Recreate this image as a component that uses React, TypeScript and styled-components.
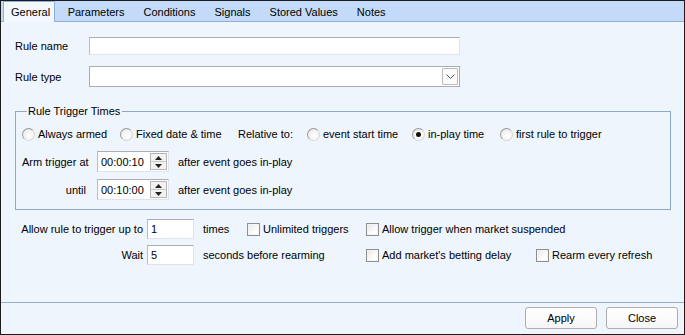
import React from "react";
import styled, { createGlobalStyle } from "styled-components";

const Global = createGlobalStyle`
  html, body { margin: 0; padding: 0; background: #ffffff; }
  body { font-family: "Liberation Sans", Arial, sans-serif; font-size: 11px; color: #000; }
  * { box-sizing: border-box; }
`;

const Window = styled.div`
  width: 685px;
  height: 335px;
  border: 1px solid #1c1c1c;
  background: #eef5fd;
  display: flex;
  flex-direction: column;
`;

const TabStrip = styled.div`
  height: 21px;
  flex: none;
  background: #c3dbf8;
  border-bottom: 1px solid #8fb0d8;
  display: flex;
  align-items: flex-end;
  padding-left: 2px;
`;

const Tab = styled.div<{ $active?: boolean }>`
  height: ${(p) => (p.$active ? "21px" : "19px")};
  margin-bottom: ${(p) => (p.$active ? "-1px" : "0")};
  padding: 0 ${(p) => (p.$active ? "4px" : "8.5px")} 0 ${(p) => (p.$active ? "7px" : "8.5px")};
  margin-right: ${(p) => (p.$active ? "3px" : "0")};
  display: flex;
  align-items: center;
  background: ${(p) => (p.$active ? "#f3f8fe" : "transparent")};
  border: 1px solid ${(p) => (p.$active ? "#8fb0d8" : "transparent")};
  border-bottom: none;
  white-space: nowrap;
`;

const Page = styled.div`
  flex: 1;
  padding: 14px 13px 0 14px;
  display: flex;
  flex-direction: column;
`;

const FormRow = styled.div<{ $mt?: number }>`
  display: flex;
  align-items: center;
  margin-top: ${(p) => p.$mt ?? 0}px;
`;

const Label = styled.div<{ $w: number; $align?: string; $pr?: number }>`
  width: ${(p) => p.$w}px;
  flex: none;
  text-align: ${(p) => p.$align ?? "left"};
  padding-right: ${(p) => p.$pr ?? 0}px;
  white-space: nowrap;
`;

const TextBox = styled.div<{ $w: number; $h: number; $ml?: number }>`
  width: ${(p) => p.$w}px;
  height: ${(p) => p.$h}px;
  margin-left: ${(p) => p.$ml ?? 0}px;
  flex: none;
  background: #fff;
  border: 1px solid #e2e3ea;
  border-top-color: #abadb3;
  border-left-color: #b9bcc4;
  display: flex;
  align-items: center;
  padding-left: 3px;
`;

const Combo = styled.div`
  width: 371px;
  height: 21px;
  background: #fff;
  border: 1px solid #acacac;
  display: flex;
  justify-content: flex-end;
  align-items: center;
  padding-right: 1px;
`;

const DropBtn = styled.div`
  width: 16px;
  height: 17px;
  border: 1px solid #bcbcbc;
  border-radius: 1px;
  background: #fbfbfb;
  display: flex;
  align-items: center;
  justify-content: center;
`;

const Group = styled.fieldset`
  margin: 17px 0 0 0;
  padding: 8px 6px 9px 6px;
  border: 1px solid #8ea9cb;
  border-radius: 0;
  min-width: 0;
`;

const Legend = styled.legend`
  padding: 0 2px 0 1px;
  margin-left: 5px;
  line-height: 14px;
`;

const RadioRow = styled.div`
  display: flex;
  align-items: center;
  height: 16px;
`;

const Option = styled.label<{ $w?: number }>`
  display: flex;
  align-items: center;
  width: ${(p) => (p.$w ? `${p.$w}px` : "auto")};
  flex: none;
  white-space: nowrap;
  gap: 3px;
`;

const Radio = styled.span<{ $checked?: boolean }>`
  width: 13px;
  height: 13px;
  border-radius: 50%;
  border: 1px solid #9a9a9a;
  border-right-color: #d6d6d6;
  border-bottom-color: #d6d6d6;
  background: radial-gradient(circle at 60% 60%, #ffffff 0%, #f2f2f2 55%, #dcdcdc 100%);
  display: inline-flex;
  align-items: center;
  justify-content: center;
  flex: none;
  &::after {
    content: "";
    width: 5px;
    height: 5px;
    border-radius: 50%;
    background: ${(p) => (p.$checked ? "#111" : "transparent")};
  }
`;

const Check = styled.span`
  width: 13px;
  height: 13px;
  flex: none;
  border: 1px solid #8e8f8f;
  background: linear-gradient(135deg, #e6e6e6 0%, #ffffff 70%);
  box-shadow: inset 0 0 0 1px #f4f4f4;
`;

const SpinBox = styled.div`
  width: 72px;
  height: 21px;
  flex: none;
  background: #fff;
  border: 1px solid #e2e3ea;
  border-top-color: #abadb3;
  border-left-color: #b9bcc4;
  display: flex;
  align-items: center;
  justify-content: space-between;
  padding: 0 1px 0 3px;
`;

const SpinButtons = styled.div`
  display: flex;
  flex-direction: column;
  width: 17px;
  height: 17px;
  border: 1px solid #b5b5b5;
  background: #f2f2f2;
`;

const SpinBtn = styled.div<{ $top?: boolean }>`
  flex: 1;
  display: flex;
  align-items: center;
  justify-content: center;
  border-bottom: ${(p) => (p.$top ? "1px solid #c8c8c8" : "none")};
`;

const Text = styled.div<{ $ml?: number; $w?: number }>`
  margin-left: ${(p) => p.$ml ?? 0}px;
  width: ${(p) => (p.$w ? `${p.$w}px` : "auto")};
  flex: none;
  white-space: nowrap;
`;

const Footer = styled.div`
  height: 32px;
  flex: none;
  border-top: 1px solid #97adca;
  display: flex;
  justify-content: flex-end;
  align-items: flex-start;
  gap: 9px;
  padding: 4px 6px 0 0;
`;

const Button = styled.button`
  width: 72px;
  height: 22px;
  font: inherit;
  color: #000;
  border: 1px solid #adadad;
  border-radius: 3px;
  background: linear-gradient(#ffffff, #f6f6f6);
  padding: 0;
`;

const Arrow = ({ up }: { up?: boolean }) => (
  <svg width="7" height="4" viewBox="0 0 7 4">
    <path d={up ? "M0 4 L3.5 0 L7 4 Z" : "M0 0 L3.5 4 L7 0 Z"} fill="#222" />
  </svg>
);

const Spinner = ({ value }: { value: string }) => (
  <SpinBox>
    <span>{value}</span>
    <SpinButtons>
      <SpinBtn $top>
        <Arrow up />
      </SpinBtn>
      <SpinBtn>
        <Arrow />
      </SpinBtn>
    </SpinButtons>
  </SpinBox>
);

const tabs = ["General", "Parameters", "Conditions", "Signals", "Stored Values", "Notes"];

export default function App() {
  return (
    <>
      <Global />
      <Window>
        <TabStrip>
          {tabs.map((t, i) => (
            <Tab key={t} $active={i === 0}>
              {t}
            </Tab>
          ))}
        </TabStrip>
        <Page>
          <FormRow $mt={1}>
            <Label $w={74}>Rule name</Label>
            <TextBox $w={371} $h={18} />
          </FormRow>
          <FormRow $mt={11}>
            <Label $w={74}>Rule type</Label>
            <Combo>
              <DropBtn>
                <svg width="9" height="5" viewBox="0 0 9 5">
                  <path d="M0.5 0.5 L4.5 4.5 L8.5 0.5" fill="none" stroke="#555" strokeWidth="1" />
                </svg>
              </DropBtn>
            </Combo>
          </FormRow>
          <Group>
            <Legend>Rule Trigger Times</Legend>
            <RadioRow>
              <Option $w={98}>
                <Radio />
                <span>Always armed</span>
              </Option>
              <Option $w={118}>
                <Radio />
                <span>Fixed date &amp; time</span>
              </Option>
              <Option $w={69}>Relative to:</Option>
              <Option $w={105}>
                <Radio />
                <span>event start time</span>
              </Option>
              <Option $w={88}>
                <Radio $checked />
                <span>in-play time</span>
              </Option>
              <Option>
                <Radio />
                <span>first rule to trigger</span>
              </Option>
            </RadioRow>
            <FormRow $mt={9}>
              <Label $w={75}>Arm trigger at</Label>
              <Spinner value="00:00:10" />
              <Text $ml={9}>after event goes in-play</Text>
            </FormRow>
            <FormRow $mt={7}>
              <Label $w={75} $align="right" $pr={11}>until</Label>
              <Spinner value="00:10:00" />
              <Text $ml={9}>after event goes in-play</Text>
            </FormRow>
          </Group>
          <FormRow $mt={9}>
            <Label $w={128} $align="right">Allow rule to trigger up to</Label>
            <TextBox $w={47} $h={20} $ml={4}>1</TextBox>
            <Text $ml={9} $w={44}>times</Text>
            <Option $w={119}>
              <Check />
              <span>Unlimited triggers</span>
            </Option>
            <Option>
              <Check />
              <span>Allow trigger when market suspended</span>
            </Option>
          </FormRow>
          <FormRow $mt={6}>
            <Label $w={128} $align="right">Wait</Label>
            <TextBox $w={47} $h={20} $ml={4}>5</TextBox>
            <Text $ml={9} $w={163}>seconds before rearming</Text>
            <Option $w={170}>
              <Check />
              <span>Add market's betting delay</span>
            </Option>
            <Option>
              <Check />
              <span>Rearm every refresh</span>
            </Option>
          </FormRow>
        </Page>
        <Footer>
          <Button>Apply</Button>
          <Button>Close</Button>
        </Footer>
      </Window>
    </>
  );
}
